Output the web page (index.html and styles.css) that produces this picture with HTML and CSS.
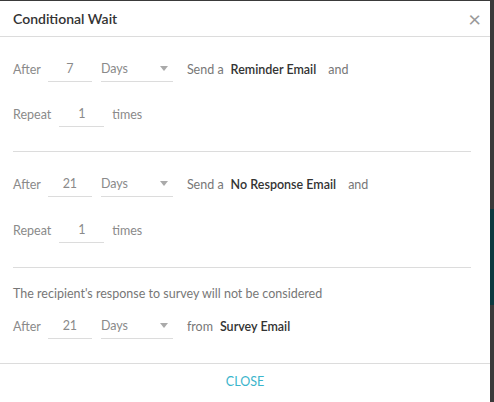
FILE: index.html
```html
<!DOCTYPE html>
<html lang="en">
<head>
    <meta charset="UTF-8">
    <meta name="viewport" content="width=device-width, initial-scale=1.0">
    <title>Conditional Wait</title>
    <link rel="stylesheet" href="styles.css">
</head>
<body>

    <div class="modal">
        <!-- Header -->
        <div class="modal-header">
            <span class="modal-title">Conditional Wait</span>
            <span class="modal-close">&times;</span>
        </div>

        <!-- Reminder -->
        <div class="section">
            <div class="row">
                <span class="label">After</span>
                <span class="field">7</span>
                <span class="select">Days <span class="caret"></span></span>
                <span class="text">Send a</span>
                <span class="strong">Reminder Email</span>
                <span class="text">and</span>
            </div>
            <div class="row">
                <span class="label">Repeat</span>
                <span class="field field-sm">1</span>
                <span class="label">times</span>
            </div>
        </div>

        <!-- No response -->
        <div class="section">
            <div class="row">
                <span class="label">After</span>
                <span class="field">21</span>
                <span class="select">Days <span class="caret"></span></span>
                <span class="text">Send a</span>
                <span class="strong">No Response Email</span>
                <span class="text">and</span>
            </div>
            <div class="row">
                <span class="label">Repeat</span>
                <span class="field field-sm">1</span>
                <span class="label">times</span>
            </div>
        </div>

        <!-- Survey -->
        <div class="section section-last">
            <p class="note">The recipient's response to survey will not be considered</p>
            <div class="row">
                <span class="label">After</span>
                <span class="field">21</span>
                <span class="select">Days <span class="caret"></span></span>
                <span class="text">from</span>
                <span class="strong">Survey Email</span>
            </div>
        </div>

        <div class="modal-footer">
            <button class="close-btn">CLOSE</button>
        </div>
    </div>

    <div class="backdrop">
        <div class="backdrop-teal"></div>
    </div>

</body>
</html>
```

FILE: styles.css
```css
body {
    margin: 0;
    height: 402px;
    overflow: hidden;
    display: flex;
    background-color: #3a3a3a;
    font-family: Lato, "Open Sans", sans-serif;
    font-size: 12.5px;
    color: #8a8a8a;
}
.modal {
    width: 490px;
    margin-top: 1px;
    background-color: #fff;
    display: flex;
    flex-direction: column;
}
.backdrop {
    flex: 1;
    display: flex;
    flex-direction: column;
}
.backdrop-teal {
    margin-top: 209px;
    height: 96px;
    background-color: #0c3a40;
}
.modal-header {
    height: 35px;
    border-bottom: 1px solid #dcdcdc;
    display: flex;
    align-items: center;
    justify-content: space-between;
    padding: 0 9px 0 13px;
}
.modal-title {
    font-size: 14px;
    font-weight: 600;
    color: #333;
}
.modal-close {
    font-size: 22px;
    color: #999;
    line-height: 1;
}
.section {
    margin: 0 19px 0 13px;
    padding: 17px 0 22px;
    border-bottom: 1px solid #dcdcdc;
    display: flex;
    flex-direction: column;
    gap: 15px;
}
.section + .section {
    padding-top: 17px;
    gap: 16px;
}
.section.section-last {
    margin: 0;
    padding: 18px 13px 22px;
    gap: 10px;
    border-bottom: 1px solid #dcdcdc;
}
.row {
    display: flex;
    align-items: center;
    height: 30px;
}
.label {
    margin-right: 7px;
}
.field {
    width: 44px;
    height: 25px;
    line-height: 25px;
    border-bottom: 1px solid #dcdcdc;
    text-align: center;
    margin-right: 9px;
}
.field-sm {
    width: 45px;
    margin-left: 1px;
    margin-right: 8px;
}
.select {
    width: 72px;
    height: 25px;
    line-height: 25px;
    border-bottom: 1px solid #dcdcdc;
    display: flex;
    align-items: center;
    justify-content: space-between;
    margin-right: 14px;
}
.caret {
    width: 0;
    height: 0;
    margin-right: 5px;
    border-left: 4px solid transparent;
    border-right: 4px solid transparent;
    border-top: 5px solid #aaa;
}
.text {
    color: #777;
}
.strong {
    color: #333;
    font-weight: 600;
    margin: 0 12px 0 7px;
}
.note {
    margin: 0;
    line-height: 15px;
    color: #777;
}
.modal-footer {
    flex: 1;
    display: flex;
    justify-content: center;
    padding-top: 8px;
}
.close-btn {
    height: 18px;
    padding: 0;
    border: none;
    background: none;
    font-family: Lato, "Open Sans", sans-serif;
    font-size: 12.5px;
    color: #3bb5cc;
    cursor: pointer;
}
```
